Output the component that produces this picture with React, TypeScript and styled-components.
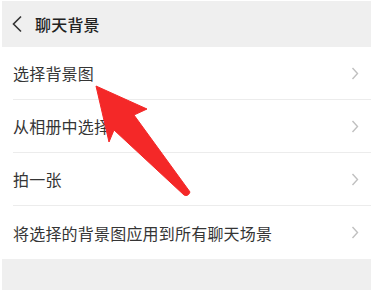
import React from "react";
import styled, { createGlobalStyle } from "styled-components";

const Global = createGlobalStyle`
  html, body { margin: 0; padding: 0; background: #ffffff; }
  body { font-family: "Noto Sans CJK SC", "Noto Sans", sans-serif; }
`;

const Page = styled.div`
  position: relative;
  width: 387px;
  height: 290px;
  overflow: hidden;
  background: #ffffff;
`;

const Screen = styled.div`
  margin: 1px 16px 0 2px;
  display: flex;
  flex-direction: column;
  height: 289px;
  background: #efefef;
`;

const Header = styled.div`
  height: 46px;
  display: flex;
  align-items: center;
  gap: 12px;
  padding-left: 9px;
  background: #efefef;
  flex-shrink: 0;
`;

const Title = styled.div`
  font-size: 16px;
  font-weight: 500;
  color: #222;
  letter-spacing: 0.2px;
`;

const List = styled.div`
  background: #ffffff;
  display: flex;
  flex-direction: column;
`;

const Row = styled.div<{ $last?: boolean }>`
  height: 53px;
  display: flex;
  align-items: center;
  justify-content: space-between;
  margin-left: 11px;
  padding-right: 12px;
  border-bottom: ${(p) => (p.$last ? "none" : "1px solid #ececec")};
  box-sizing: border-box;
`;

const Label = styled.span`
  font-size: 16px;
  color: #353535;
  letter-spacing: 0.2px;
`;

const Filler = styled.div`
  flex: 1;
  background: #efefef;
`;

const ArrowOverlay = styled.svg`
  position: absolute;
  left: 0;
  top: 0;
  pointer-events: none;
`;

const Back = () => (
  <svg width="12" height="18" viewBox="0 0 12 18">
    <path d="M10 1.5 L2.5 9 L10 16.5" fill="none" stroke="#333" strokeWidth="1.6" />
  </svg>
);

const Chevron = () => (
  <svg width="8" height="13" viewBox="0 0 8 13">
    <path d="M1.5 1 L6.5 6.5 L1.5 12" fill="none" stroke="#c0c0c0" strokeWidth="1.4" />
  </svg>
);

const items = ["选择背景图", "从相册中选择", "拍一张", "将选择的背景图应用到所有聊天场景"];

export default function App() {
  return (
    <>
      <Global />
      <Page>
        <Screen>
          <Header>
            <Back />
            <Title>聊天背景</Title>
          </Header>
          <List>
            {items.map((t, i) => (
              <Row key={t} $last={i === items.length - 1}>
                <Label>{t}</Label>
                <Chevron />
              </Row>
            ))}
          </List>
          <Filler />
        </Screen>
        <ArrowOverlay width="387" height="290" viewBox="0 0 387 290">
          <path
            d="M96 86 L147 109 L134 115 L190 192 Q188 197 184 195 L114 130 L109 142 Z"
            fill="#f42828"
            stroke="#f42828"
            strokeWidth="1"
            strokeLinejoin="round"
          />
        </ArrowOverlay>
      </Page>
    </>
  );
}
